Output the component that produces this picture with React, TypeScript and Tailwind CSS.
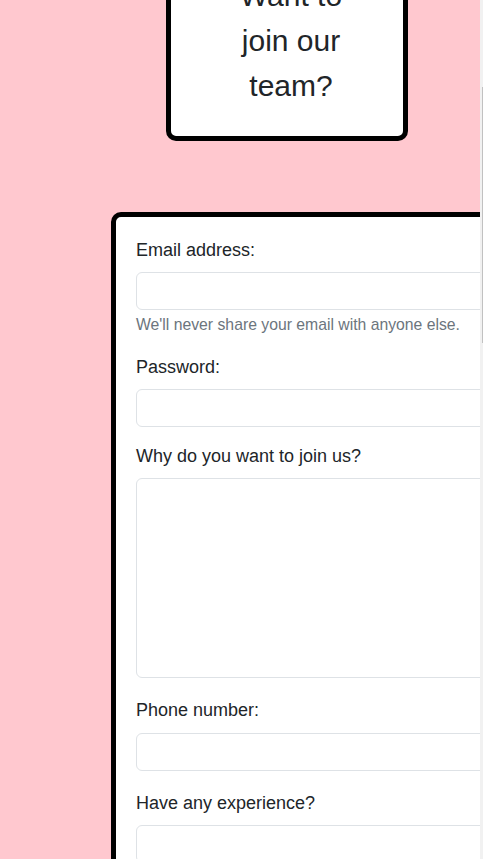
import React from 'react';

const fieldLabel = 'block text-[18px] leading-[27px] text-[#212529]';
const fieldInput =
  'block w-full h-[38px] rounded-[6px] border border-[#dee2e6] bg-white px-3 text-[18px] text-[#212529] outline-none';

const App: React.FC = () => {
  return (
    <div
      className="flex h-[859px] w-[483px] overflow-hidden bg-[#ffc8cf]"
      style={{ fontFamily: '"Liberation Sans", Arial, sans-serif' }}
    >
      {/* page, scrolled a little down */}
      <div className="w-[480px] shrink-0 overflow-hidden">
        <div className="-mt-[52px] ml-[166px] w-[242px] rounded-[10px] border-[5px] border-black bg-white pt-[20px] pb-[28px] pl-[49px] pr-[41px]">
          <h2 className="text-center text-[30px] leading-[45px] text-[#212529]">
            Want to join our team?
          </h2>
        </div>

        <form className="mt-[71px] ml-[111px] w-[520px] rounded-[10px] border-[5px] border-black bg-white px-[20px] pt-[20px] pb-10">
          <div className="mb-[17px]">
            <label className={`${fieldLabel} mb-2`}>Email address:</label>
            <input type="email" className={fieldInput} />
            <p className="mt-[3px] text-[15.75px] leading-[23.6px] text-[#6c757d]">
              We'll never share your email with anyone else.
            </p>
          </div>

          <div className="mb-4">
            <label className={`${fieldLabel} mb-2`}>Password:</label>
            <input type="password" className={fieldInput} />
          </div>

          <div className="mb-[19px]">
            <label className={`${fieldLabel} mb-2`}>Why do you want to join us?</label>
            <textarea className="block h-[200px] w-full resize-none rounded-[6px] border border-[#dee2e6] bg-white px-3 py-1.5 text-[18px] text-[#212529] outline-none" />
          </div>

          <div className="mb-[19px]">
            <label className={`${fieldLabel} mb-[9px]`}>Phone number:</label>
            <input type="tel" className={fieldInput} />
          </div>

          <div className="mb-4">
            <label className={`${fieldLabel} mb-2`}>Have any experience?</label>
            <input type="text" className={fieldInput} />
          </div>
        </form>
      </div>

      {/* cropped scrollbar */}
      <div className="w-[3px] shrink-0 bg-[#f1f1f1]">
        <div className="ml-[2px] mt-[87px] h-[256px] w-[1px] bg-[#c1c1c1]" />
      </div>
    </div>
  );
};

export default App;
